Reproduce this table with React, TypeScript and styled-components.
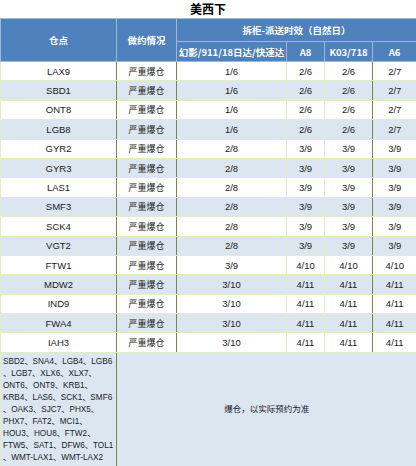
import React from "react";
import styled, { createGlobalStyle } from "styled-components";

const Global = createGlobalStyle`
  html, body { margin: 0; padding: 0; background: #ffffff; }
  body { font-family: "Liberation Sans", "Noto Sans CJK SC", sans-serif; }
`;

const Page = styled.div`
  width: 416px;
  background: #ffffff;
`;

const Title = styled.div`
  height: 18px;
  line-height: 18px;
  text-align: center;
  font-family: "Noto Sans CJK SC", sans-serif;
  font-weight: 700;
  font-size: 12px;
  color: #000;
`;

const Table = styled.table`
  width: 416px;
  border-collapse: collapse;
  table-layout: fixed;
  font-size: 9.5px;
  color: #1a1a1a;
`;

const Head = styled.th<{ $h: number }>`
  height: ${(p) => p.$h}px;
  padding: 0;
  background: #4f81bd;
  color: #ffffff;
  font-family: "Noto Sans CJK SC", sans-serif;
  font-weight: 700;
  font-size: 9.5px;
  text-align: center;
  border: 1px solid #9db7d9;
  white-space: nowrap;
  box-sizing: border-box;
`;

const Row = styled.tr<{ $alt: boolean }>`
  background: ${(p) => (p.$alt ? "#dce6f1" : "#ffffff")};
`;

const Cell = styled.td<{ $dark?: boolean; $top?: boolean }>`
  height: 19.4px;
  padding: 0;
  text-align: center;
  box-sizing: border-box;
  white-space: nowrap;
  border-left: 1px solid ${(p) => (p.$dark ? "#75854e" : "#e3ecc6")};
  border-top: 1px solid ${(p) => (p.$top ? "#75854e" : "#e3ecc6")};
  border-bottom: 1px solid #e3ecc6;
  font-family: "Liberation Sans", "Noto Sans CJK SC", sans-serif;
`;

const ListCell = styled.td`
  padding: 3px 0 2px 2px;
  vertical-align: top;
  background: #dce6f1;
  border-left: 1px solid #e3ecc6;
  border-top: 1px solid #e3ecc6;
  font-size: 8.2px;
  line-height: 12px;
  color: #1a1a1a;
  height: 114px;
  box-sizing: border-box;
`;

const Line = styled.div`
  white-space: nowrap;
`;

const NoteCell = styled.td`
  background: #dce6f1;
  border-left: 1px solid #75854e;
  border-top: 1px solid #e3ecc6;
  text-align: center;
  vertical-align: middle;
  font-family: "Noto Sans CJK SC", sans-serif;
  font-size: 8.5px;
  color: #1a1a1a;
  padding: 0 0 4px 0;
`;

const Status = styled.span`
  font-family: "Noto Sans CJK SC", sans-serif;
  font-size: 9px;
`;

const rows: [string, string, string, string, string, boolean][] = [
  ["LAX9", "1/6", "2/6", "2/6", "2/7", false],
  ["SBD1", "1/6", "2/6", "2/6", "2/7", false],
  ["ONT8", "1/6", "2/6", "2/6", "2/7", false],
  ["LGB8", "1/6", "2/6", "2/6", "2/7", true],
  ["GYR2", "2/8", "3/9", "3/9", "3/9", true],
  ["GYR3", "2/8", "3/9", "3/9", "3/9", false],
  ["LAS1", "2/8", "3/9", "3/9", "3/9", false],
  ["SMF3", "2/8", "3/9", "3/9", "3/9", true],
  ["SCK4", "2/8", "3/9", "3/9", "3/9", false],
  ["VGT2", "2/8", "3/9", "3/9", "3/9", false],
  ["FTW1", "3/9", "4/10", "4/10", "4/10", false],
  ["MDW2", "3/10", "4/11", "4/11", "4/11", false],
  ["IND9", "3/10", "4/11", "4/11", "4/11", false],
  ["FWA4", "3/10", "4/11", "4/11", "4/11", false],
  ["IAH3", "3/10", "4/11", "4/11", "4/11", false],
];

const listLines = [
  "SBD2、SNA4、LGB4、LGB6",
  "、LGB7、XLX6、XLX7、",
  "ONT6、ONT9、KRB1、",
  "KRB4、LAS6、SCK1、SMF6",
  "、OAK3、SJC7、PHX5、",
  "PHX7、FAT2、MCI1、",
  "HOU3、HOU8、FTW2、",
  "FTW5、SAT1、DFW6、TOL1",
  "、WMT-LAX1、WMT-LAX2",
];

export default function App() {
  return (
    <Page>
      <Global />
      <Title>美西下</Title>
      <Table>
        <colgroup>
          <col style={{ width: 116 }} />
          <col style={{ width: 60 }} />
          <col style={{ width: 110 }} />
          <col style={{ width: 38 }} />
          <col style={{ width: 48 }} />
          <col style={{ width: 44 }} />
        </colgroup>
        <thead>
          <tr>
            <Head $h={23} rowSpan={2}>仓点</Head>
            <Head $h={23} rowSpan={2}>做约情况</Head>
            <Head $h={23} colSpan={4}>拆柜-派送时效（自然日）</Head>
          </tr>
          <tr>
            <Head $h={20}>幻影/911/18日达/快速达</Head>
            <Head $h={20}>A8</Head>
            <Head $h={20}>K03/718</Head>
            <Head $h={20}>A6</Head>
          </tr>
        </thead>
        <tbody>
          {rows.map(([code, a, b, c, d, top], i) => (
            <Row key={code} $alt={i % 2 === 1}>
              <Cell $top={top}>{code}</Cell>
              <Cell $dark $top={top}>
                <Status>严重爆仓</Status>
              </Cell>
              <Cell $dark $top={top}>{a}</Cell>
              <Cell $top={top}>{b}</Cell>
              <Cell $top={top}>{c}</Cell>
              <Cell $dark $top={top}>{d}</Cell>
            </Row>
          ))}
          <tr>
            <ListCell>
              {listLines.map((l) => (
                <Line key={l}>{l}</Line>
              ))}
            </ListCell>
            <NoteCell colSpan={5}>爆仓，以实际预约为准</NoteCell>
          </tr>
        </tbody>
      </Table>
    </Page>
  );
}
